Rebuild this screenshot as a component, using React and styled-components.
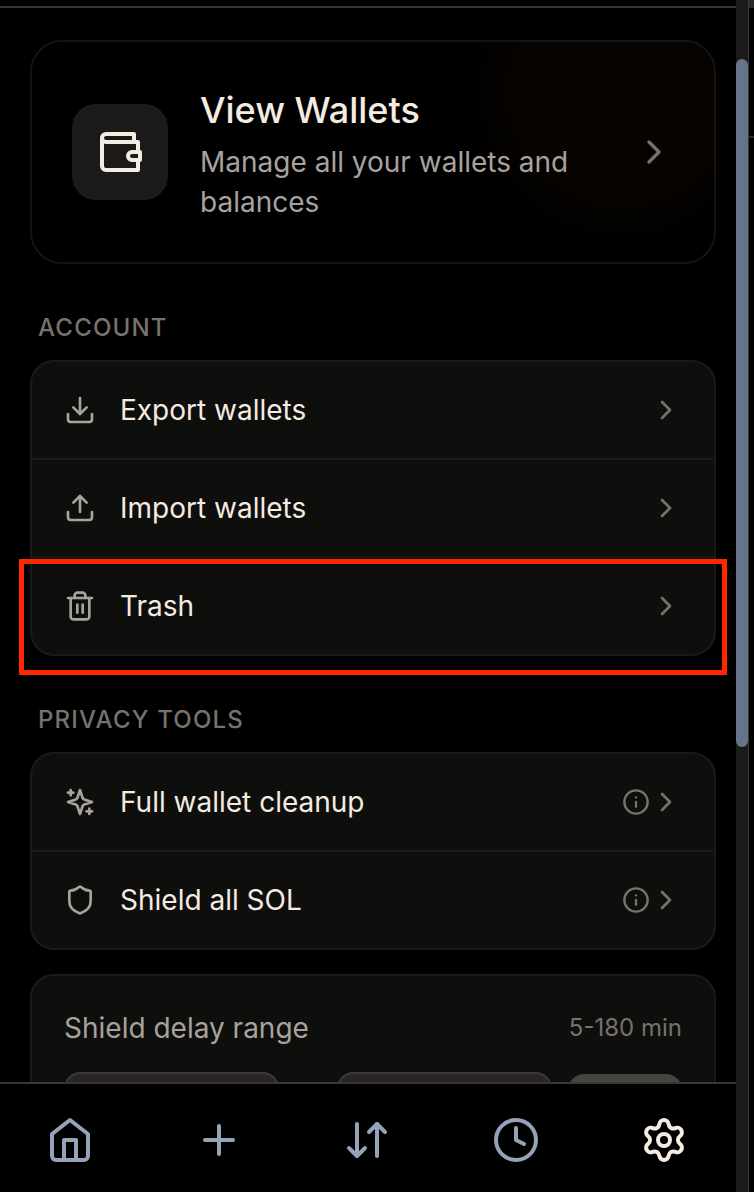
import React from "react";
import styled, { createGlobalStyle, css } from "styled-components";
import {
  ArrowDownUp,
  ChevronRight,
  Clock,
  Download,
  Info,
  Plus,
  Settings,
  Shield,
  Upload,
} from "lucide-react";

const strokeProps = {
  viewBox: "0 0 24 24",
  fill: "none",
  stroke: "currentColor",
  strokeWidth: 2,
  strokeLinecap: "round",
  strokeLinejoin: "round",
};

const WalletIcon = ({ size }) => (
  <svg width={size} height={size} {...strokeProps}>
    <path d="M21 12V7H5a2 2 0 0 1 0-4h14v4" />
    <path d="M3 5v14a2 2 0 0 0 2 2h16v-5" />
    <path d="M18 12a2 2 0 0 0 0 4h4v-4Z" />
  </svg>
);

const TrashIcon = ({ size }) => (
  <svg width={size} height={size} {...strokeProps}>
    <path d="M3 6h18" />
    <path d="M19 6v14c0 1-1 2-2 2H7c-1 0-2-1-2-2V6" />
    <path d="M8 6V4c0-1 1-2 2-2h4c1 0 2 1 2 2v2" />
    <path d="M10 11v6" />
    <path d="M14 11v6" />
  </svg>
);

const SparklesIcon = ({ size }) => (
  <svg width={size} height={size} {...strokeProps}>
    <path d="m12 3-1.912 5.813a2 2 0 0 1-1.275 1.275L3 12l5.813 1.912a2 2 0 0 1 1.275 1.275L12 21l1.912-5.813a2 2 0 0 1 1.275-1.275L21 12l-5.813-1.912a2 2 0 0 1-1.275-1.275L12 3Z" />
    <path d="M5 3v4" />
    <path d="M19 17v4" />
    <path d="M3 5h4" />
    <path d="M17 19h4" />
  </svg>
);

const HomeIcon = ({ size }) => (
  <svg width={size} height={size} {...strokeProps}>
    <path d="m3 9 9-7 9 7v11a2 2 0 0 1-2 2H5a2 2 0 0 1-2-2z" />
    <path d="M9 22V12h6v10" />
  </svg>
);

const accountItems = [
  { label: "Export wallets", icon: Download },
  { label: "Import wallets", icon: Upload },
  { label: "Trash", icon: TrashIcon, highlighted: true },
];

const privacyItems = [
  { label: "Full wallet cleanup", icon: SparklesIcon, info: true },
  { label: "Shield all SOL", icon: Shield, info: true },
];

const navItems = [
  { name: "home", icon: HomeIcon },
  { name: "add", icon: Plus },
  { name: "swap", icon: ArrowDownUp },
  { name: "history", icon: Clock },
  { name: "settings", icon: Settings, active: true },
];

const Menu = ({ title, items }) => (
  <>
    <SectionTitle>{title}</SectionTitle>
    <Card>
      {items.map(({ label, icon: Icon, info, highlighted }) => (
        <MenuRow key={label}>
          <RowIcon>
            <Icon size={32} />
          </RowIcon>
          <RowLabel>{label}</RowLabel>
          <RowActions>
            {info && <Info size={28} />}
            <ChevronRight size={32} />
          </RowActions>
          {highlighted && <Highlight />}
        </MenuRow>
      ))}
    </Card>
  </>
);

const App = () => (
  <>
    <GlobalStyle />
    <Window>
      <Screen>
        <Header />
        <Content>
          <WalletsCard>
            <WalletBadge>
              <WalletIcon size={48} />
            </WalletBadge>
            <WalletText>
              <WalletTitle>View Wallets</WalletTitle>
              <WalletInfo>Manage all your wallets and balances</WalletInfo>
            </WalletText>
            <ChevronRight size={40} />
          </WalletsCard>

          <Menu title="Account" items={accountItems} />
          <Menu title="Privacy tools" items={privacyItems} />

          <DelayCard>
            <DelayHeader>
              <DelayLabel>Shield delay range</DelayLabel>
              <DelayValue>5-180 min</DelayValue>
            </DelayHeader>
            <DelayForm>
              <DelayField />
              <DelaySpacer />
              <DelayField />
              <SaveButton />
            </DelayForm>
          </DelayCard>
        </Content>
        <Nav>
          {navItems.map(({ name, icon: Icon, active }) => (
            <NavButton key={name} aria-label={name} $active={active}>
              <Icon size={48} />
            </NavButton>
          ))}
        </Nav>
      </Screen>
      <Scrollbar>
        <Thumb />
      </Scrollbar>
      <NextPane>
        <PaneHeader />
        <PaneSection />
      </NextPane>
    </Window>
  </>
);

const GlobalStyle = createGlobalStyle`
  * {
    box-sizing: border-box;
  }
  body {
    margin: 0;
    background: #000;
    font-family: Inter, sans-serif;
    overflow: hidden;
  }
  svg {
    display: block;
    flex-shrink: 0;
  }
`;

const Window = styled.div`
  display: flex;
  width: 754px;
  height: 1192px;
  background: #000;
  overflow: hidden;
`;

const Screen = styled.div`
  display: flex;
  flex-direction: column;
  width: 736px;
  height: 1192px;
`;

const Header = styled.header`
  flex: none;
  height: 8px;
  border-bottom: 2px solid #383734;
`;

const Content = styled.main`
  flex: 1;
  min-height: 0;
  padding: 32px 20px 0 30px;
  overflow: hidden;
`;

const cardBase = css`
  border: 2px solid #1b1a18;
  border-radius: 24px;
  background: #0e0e0c;
`;

const WalletsCard = styled.section`
  display: flex;
  align-items: center;
  height: 224px;
  padding: 40px;
  border: 2px solid #151413;
  border-radius: 32px;
  background: radial-gradient(circle at 590px 50px, #060301 0, #060300 110px, #000 160px);
  color: #78716c;
`;

const WalletBadge = styled.div`
  display: flex;
  align-items: center;
  justify-content: center;
  width: 96px;
  height: 96px;
  border-radius: 24px;
  background: #1b1a18;
  color: #f5ebe0;
`;

const WalletText = styled.div`
  flex: 1;
  margin: 0 32px;
`;

const WalletTitle = styled.div`
  margin-bottom: 4px;
  color: #f5ebe0;
  font-size: 36px;
  font-weight: 500;
  line-height: 56px;
`;

const WalletInfo = styled.div`
  color: #a8a29e;
  font-size: 28px;
  line-height: 40px;
`;

const SectionTitle = styled.h2`
  margin: 48px 0 16px 8px;
  color: #78716c;
  font-size: 24px;
  font-weight: 500;
  line-height: 32px;
  letter-spacing: 1.2px;
  text-transform: uppercase;
`;

const Card = styled.section`
  ${cardBase}
`;

const MenuRow = styled.div`
  position: relative;
  display: flex;
  align-items: center;
  height: 96px;
  padding: 0 32px;

  & + & {
    height: 98px;
    border-top: 2px solid #1b1a18;
  }
`;

const RowIcon = styled.div`
  margin-right: 24px;
  color: #a8a29e;
`;

const RowLabel = styled.div`
  flex: 1;
  color: #f5ebe0;
  font-size: 28px;
  line-height: 40px;
`;

const RowActions = styled.div`
  display: flex;
  align-items: center;
  color: #78716c;
`;

/* red frame laid over a menu row */
const Highlight = styled.div`
  position: absolute;
  top: 1px;
  right: -13px;
  bottom: -21px;
  left: -13px;
  border: 5px solid #ff2600;
`;

const DelayCard = styled.section`
  ${cardBase}
  height: 240px;
  margin-top: 24px;
  padding: 32px;
`;

const DelayHeader = styled.div`
  display: flex;
  align-items: center;
  justify-content: space-between;
  margin-bottom: 24px;
`;

const DelayLabel = styled.div`
  color: #a8a29e;
  font-size: 28px;
  line-height: 40px;
`;

const DelayValue = styled.div`
  color: #78716c;
  font-size: 24px;
  line-height: 32px;
`;

const DelayForm = styled.div`
  display: flex;
  align-items: center;
  gap: 16px;
`;

const DelayField = styled.div`
  width: 215px;
  height: 68px;
  border: 2px solid #3b3a37;
  border-radius: 16px;
  background: #292524;
`;

const DelaySpacer = styled.div`
  width: 26px;
`;

const SaveButton = styled.div`
  flex: 1;
  height: 64px;
  border-radius: 16px;
  background: #454441;
`;

const Nav = styled.nav`
  display: flex;
  flex: none;
  justify-content: space-between;
  height: 110px;
  padding: 0 16px 0 14px;
  border-top: 2px solid #383734;
`;

const NavButton = styled.button`
  display: flex;
  align-items: center;
  justify-content: center;
  width: 112px;
  height: 112px;
  padding: 0;
  border: 0;
  background: none;
  color: ${(props) => (props.$active ? "#f5ebe0" : "#94a3b8")};
`;

const Scrollbar = styled.div`
  width: 12px;
  padding-top: 59px;
  background: #1b1a18;
`;

const Thumb = styled.div`
  height: 688px;
  border-radius: 6px;
  background: #64748b;
`;

/* sliver of the page that sits beside the panel */
const NextPane = styled.div`
  flex: 1;
  border-left: 1px solid #383734;
`;

const PaneHeader = styled.div`
  height: 8px;
  background: #292826;
`;

const PaneSection = styled.div`
  height: 130px;
  border-bottom: 2px solid #292826;
`;

export default App;
